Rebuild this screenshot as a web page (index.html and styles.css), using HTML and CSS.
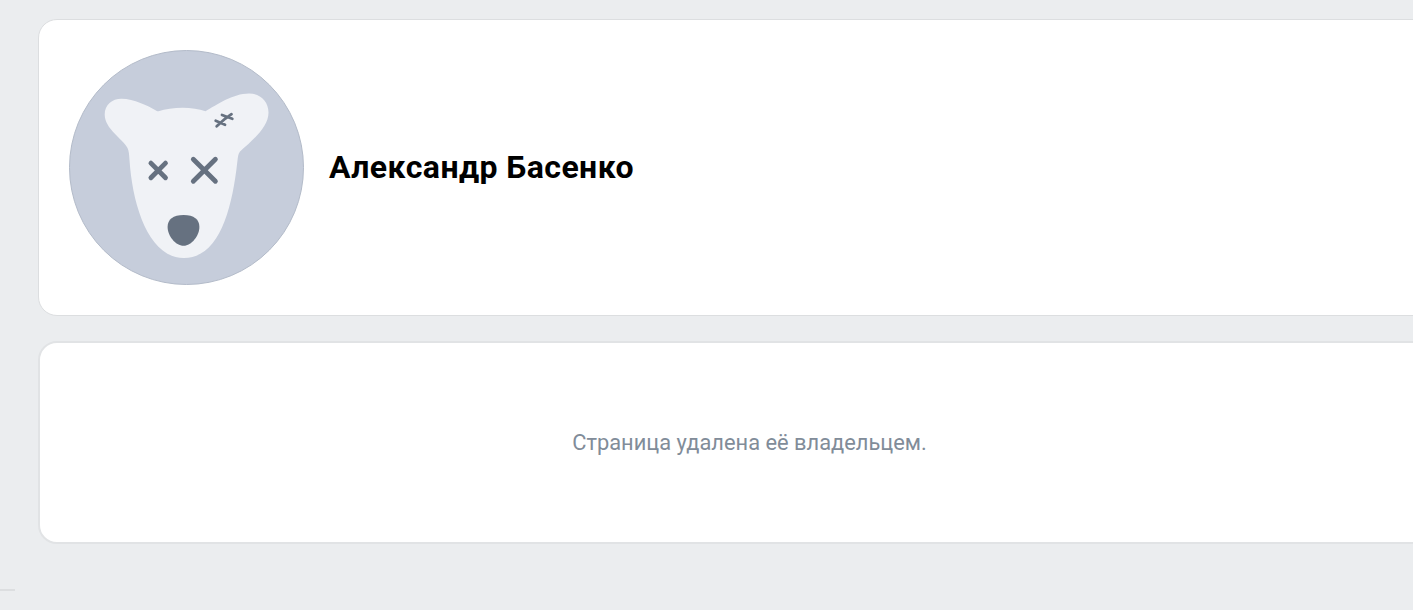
FILE: index.html
```html
<!DOCTYPE html>
<html lang="ru">
<head>
    <meta charset="UTF-8">
    <meta name="viewport" content="width=device-width, initial-scale=1.0">
    <title>Александр Басенко</title>
    <link rel="stylesheet" href="styles.css">
</head>
<body>
    <main class="page">
        <section class="block profile">
            <svg class="avatar" viewBox="0 0 235 235" aria-hidden="true">
                <circle class="avatar-bg" cx="117.5" cy="117.5" r="117"/>
                <path class="dog-head" d="M89.5 61.2C96 58.9 105 57.7 113.7 57.7C122 57.7 130 58.9 136.5 61.2C147 55 164 43.4 180 43.4C191 43.4 199.5 51.5 199.5 62.5C199.5 77 184 90 171 101.5C169 104 169 107 168.3 112C163 160 150 208 114.9 208C79.5 208 63.5 155 60.5 110C60.2 105 60 101 58.5 98C54 89 35.7 79 35.7 64.5C35.7 55 43 48.8 52.5 48.8C65 48.8 79 56 86.5 60.2C87.8 60.9 88.5 61.4 89.5 61.2Z"/>
                <path class="dog-nose" d="M114.7 165.1C125 165.1 130.4 169.5 130.4 177C130.4 185.5 122.5 195.8 114.6 195.8C106.3 195.8 98.6 185.5 98.6 177C98.6 169.5 104 165.1 114.7 165.1Z"/>
                <path class="dog-eye" d="M81.9 113.1L96.5 127.7M96.5 113.1L81.9 127.7"/>
                <path class="dog-eye" d="M124.3 109.2L146.4 131.3M146.4 109.2L124.3 131.3"/>
                <path class="dog-scar" d="M147.7 76.3L156 68.8L162.5 64.2M146.7 70.8L156 74.8M153 65L163.3 68.7"/>
            </svg>
            <h1 class="name">Александр Басенко</h1>
        </section>

        <section class="block message">
            <p>Страница удалена её владельцем.</p>
        </section>

        <hr class="line">
    </main>
</body>
</html>
```

FILE: styles.css
```css
body {
    font-family: Roboto, sans-serif;
    margin: 0;
    background-color: #ebedef;
    overflow: hidden;
}

.page {
    width: 1461px;
    padding-top: 19px;
}

.block {
    box-sizing: border-box;
    margin-left: 38px;
    border: 1px solid #dcdee0;
    border-radius: 19px;
    background-color: #fff;
}

.profile {
    display: flex;
    align-items: center;
    height: 297px;
    padding-left: 30px;
}

.avatar {
    width: 235px;
    height: 235px;
}

.avatar-bg {
    fill: #c6cddb;
    stroke: #b3bbc9;
    stroke-width: 1;
}

.dog-head {
    fill: #f0f2f6;
}

.dog-nose {
    fill: #667180;
}

.dog-eye,
.dog-scar {
    fill: none;
    stroke: #667180;
    stroke-width: 4.8;
    stroke-linecap: round;
}

.dog-scar {
    stroke-width: 2.8;
}

.name {
    margin: 0 0 2px 25px;
    font-size: 32px;
    font-weight: 700;
    line-height: 38px;
    letter-spacing: 0.44px;
    color: #000;
}

.message {
    display: flex;
    align-items: center;
    justify-content: center;
    height: 203px;
    margin-top: 25px;
    border: 2px solid #e1e3e5;
}

.message p {
    margin: 0;
    font-size: 21.85px;
    color: #818c99;
}

.line {
    width: 15px;
    height: 2px;
    margin: 45px 0 0;
    border: 0;
    background-color: #dcdee0;
}
```
